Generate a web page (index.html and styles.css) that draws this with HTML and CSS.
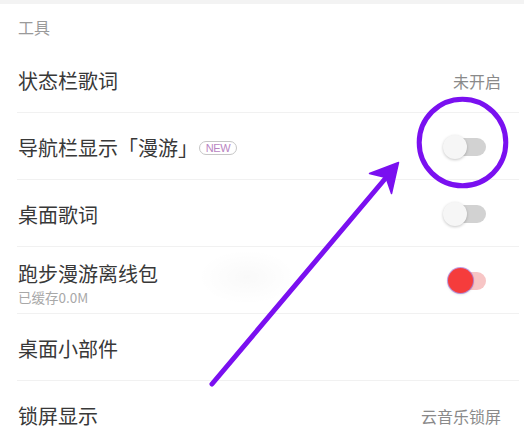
FILE: index.html
```html
<!DOCTYPE html>
<html lang="zh-CN">
<head>
<meta charset="utf-8">
<title>工具设置</title>
<link rel="stylesheet" href="styles.css">
</head>
<body>
<div class="screen">
  <div class="topband"></div>
  <div class="section-title">工具</div>
  <div class="list">
    <div class="row">
      <div class="label">状态栏歌词</div>
      <div class="value">未开启</div>
    </div>
    <div class="row">
      <div class="label-wrap">
        <div class="label">导航栏显示「漫游」</div>
        <span class="badge">NEW</span>
      </div>
      <div class="switch">
        <span class="track"></span>
        <span class="knob"></span>
      </div>
    </div>
    <div class="row">
      <div class="label">桌面歌词</div>
      <div class="switch">
        <span class="track"></span>
        <span class="knob"></span>
      </div>
    </div>
    <div class="row row-blob">
      <div class="label-col">
        <div class="label">跑步漫游离线包</div>
        <div class="sub">已缓存0.0M</div>
      </div>
      <div class="switch switch-on">
        <span class="track"></span>
        <span class="knob"></span>
      </div>
    </div>
    <div class="row">
      <div class="label">桌面小部件</div>
    </div>
    <div class="row">
      <div class="label">锁屏显示</div>
      <div class="value">云音乐锁屏</div>
    </div>
  </div>
  <svg class="annotation" width="524" height="437" viewBox="0 0 524 437">
    <circle cx="462.5" cy="142.5" r="43.3" fill="none" stroke="#7a10f0" stroke-width="5"/>
    <line x1="212" y1="384" x2="387" y2="176.5" stroke="#7a10f0" stroke-width="5" stroke-linecap="round"/>
    <path d="M398.5 162.5 L369.5 173.5 L386 177.5 L391.5 193.5 Z" fill="#7a10f0" stroke="#7a10f0" stroke-width="1.5" stroke-linejoin="round"/>
  </svg>
</div>
</body>
</html>
```

FILE: styles.css
```css
html, body {
  margin: 0;
  padding: 0;
  background: #ffffff;
}

.screen {
  position: relative;
  width: 524px;
  height: 437px;
  overflow: hidden;
  background: #ffffff;
  font-family: "Noto Sans CJK SC", "Noto Sans", sans-serif;
  color: #333333;
}

.topband {
  height: 4px;
  background: #f3f3f3;
}

.section-title {
  height: 42px;
  display: flex;
  align-items: center;
  padding-left: 18px;
  padding-top: 3px;
  box-sizing: border-box;
  font-size: 16px;
  color: #9a9a9a;
}

.list {
  display: flex;
  flex-direction: column;
}

.row {
  position: relative;
  height: 63px;
  margin: 0 5px 0 17px;
  padding: 3px 18px 0 1px;
  display: flex;
  align-items: center;
  justify-content: space-between;
  border-bottom: 1px solid #f1f1f1;
  box-sizing: content-box;
}

.row-blob::before {
  content: "";
  position: absolute;
  left: 180px;
  top: 2px;
  width: 100px;
  height: 56px;
  border-radius: 50%;
  background: radial-gradient(ellipse at center, rgba(0,0,0,0.025), rgba(0,0,0,0) 70%);
}

.label {
  font-size: 20px;
  line-height: 24px;
  color: #383838;
}

.label-wrap {
  display: flex;
  align-items: center;
}

.badge {
  margin-left: 1px;
  margin-top: 1px;
  width: 36px;
  height: 12px;
  border: 1px solid #c6c6c6;
  border-radius: 8px;
  display: flex;
  align-items: center;
  justify-content: center;
  font-family: "Liberation Sans", Arial, sans-serif;
  font-size: 11px;
  color: #b984c2;
  letter-spacing: -0.4px;
}

.label-col {
  display: flex;
  flex-direction: column;
  gap: 3px;
  padding-top: 4px;
}

.sub {
  font-size: 13.5px;
  line-height: 16px;
  color: #a8a8a8;
}

.value {
  font-size: 16px;
  color: #8a8a8a;
}

.switch {
  position: relative;
  width: 43px;
  height: 25px;
  margin-right: 15px;
}

.switch .track {
  position: absolute;
  right: 0;
  top: 3px;
  width: 38px;
  height: 18px;
  border-radius: 9px;
  background: #d2d2d2;
}

.switch .knob {
  position: absolute;
  left: 0;
  top: 0;
  width: 24px;
  height: 24px;
  border-radius: 50%;
  background: #f6f6f6;
  box-shadow: 0 1px 3px rgba(0, 0, 0, 0.22);
}

.switch-on {
  width: 38px;
}

.switch-on .track {
  width: 32px;
  background: #f7c5c5;
}

.switch-on .knob {
  width: 25px;
  height: 25px;
  top: -1px;
  background: #f53c3c;
  box-shadow: 0 0 0 1px rgba(140, 60, 200, 0.5), 0 1px 3px rgba(0, 0, 0, 0.2);
}

.annotation {
  position: absolute;
  left: 0;
  top: 0;
  pointer-events: none;
}
```
